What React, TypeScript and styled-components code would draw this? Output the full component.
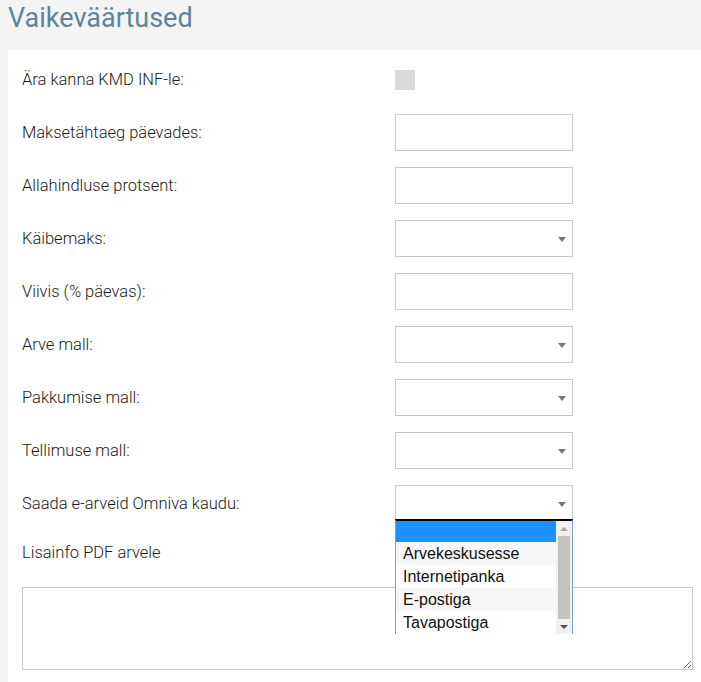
import React from "react";
import styled, { createGlobalStyle } from "styled-components";

const Global = createGlobalStyle`
  html, body { margin: 0; padding: 0; background: #f4f4f4; overflow: hidden; }
  body { font-family: Roboto, "Liberation Sans", sans-serif; }
  * { box-sizing: border-box; }
`;

const Page = styled.div`
  padding-left: 8px;
  min-height: 682px;
`;

const Title = styled.h1`
  margin: 0 0 14px 0;
  font-family: Roboto, sans-serif;
  font-weight: 400;
  font-size: 27px;
  line-height: 36px;
  color: #5f8499;
`;

const Panel = styled.div`
  background: #fff;
  padding: 11px 8px 20px 14px;
  display: flex;
  flex-direction: column;
  gap: 16px;
`;

const Row = styled.div`
  display: flex;
  align-items: center;
  height: 37px;
`;

const Label = styled.label`
  width: 373px;
  flex: none;
  font-size: 16.5px;
  font-weight: 300;
  color: #1a1a1a;
`;

const Checkbox = styled.span`
  width: 20px;
  height: 20px;
  background: #d9d9d9;
  display: block;
`;

const Input = styled.input`
  width: 178px;
  height: 37px;
  border: 1px solid #c8c8c8;
  background: #fff;
  outline: none;
  padding: 0 8px;
`;

const SelectWrap = styled.div`
  position: relative;
  width: 178px;
  height: 37px;
`;

const SelectBox = styled.div`
  width: 178px;
  height: 37px;
  border: 1px solid #c8c8c8;
  background: #fff;
  position: relative;
  &::after {
    content: "";
    position: absolute;
    right: 6px;
    top: 16px;
    border-left: 4px solid transparent;
    border-right: 4px solid transparent;
    border-top: 5px solid #777;
  }
`;

const List = styled.div`
  position: absolute;
  left: 0;
  top: 34px;
  width: 178px;
  height: 115px;
  border-top: 2px solid #000;
  border-left: 1px solid #7e9fd4;
  border-right: 1px solid #7e9fd4;
  background: #fff;
  display: flex;
  z-index: 2;
  font-family: "Liberation Sans", Arial, sans-serif;
  font-size: 16px;
  color: #111;
`;

const Options = styled.div`
  flex: 1;
  display: flex;
  flex-direction: column;
`;

const Option = styled.div<{ $selected?: boolean; $alt?: boolean }>`
  height: ${(p) => (p.$selected ? 21 : 23)}px;
  line-height: 24px;
  padding-left: 7px;
  background: ${(p) => (p.$selected ? "#1e90ff" : p.$alt ? "#f6f6f6" : "#fff")};
  white-space: nowrap;
`;

const Scrollbar = styled.div`
  width: 16px;
  flex: none;
  background: #f1f1f1;
  display: flex;
  flex-direction: column;
  align-items: center;
`;

const ScrollArrow = styled.div<{ $down?: boolean }>`
  height: 15px;
  width: 16px;
  display: flex;
  align-items: center;
  justify-content: center;
  &::before {
    content: "";
    border-left: 4px solid transparent;
    border-right: 4px solid transparent;
    ${(p) =>
      p.$down ? "border-top: 4px solid #505050;" : "border-bottom: 4px solid #a3a3a3;"}
  }
`;

const Thumb = styled.div`
  flex: 1;
  width: 12px;
  background: #c1c1c1;
`;

const BlockLabel = styled.div`
  height: 30px;
  line-height: 30px;
  font-size: 16.5px;
  font-weight: 300;
  color: #1a1a1a;
  margin-bottom: 19px;
`;

const TextArea = styled.textarea`
  display: block;
  width: 100%;
  height: 83px;
  border: 1px solid #c8c8c8;
  resize: both;
  outline: none;
`;

const Section = styled.div``;

const rows: { label: string; kind: "check" | "input" | "select" }[] = [
  { label: "Ära kanna KMD INF-le:", kind: "check" },
  { label: "Maksetähtaeg päevades:", kind: "input" },
  { label: "Allahindluse protsent:", kind: "input" },
  { label: "Käibemaks:", kind: "select" },
  { label: "Viivis (% päevas):", kind: "input" },
  { label: "Arve mall:", kind: "select" },
  { label: "Pakkumise mall:", kind: "select" },
  { label: "Tellimuse mall:", kind: "select" },
];

export default function App() {
  return (
    <>
      <Global />
      <Page>
        <Title>Vaikeväärtused</Title>
        <Panel>
          {rows.map((r) => (
            <Row key={r.label}>
              <Label>{r.label}</Label>
              {r.kind === "check" && <Checkbox />}
              {r.kind === "input" && <Input />}
              {r.kind === "select" && (
                <SelectWrap>
                  <SelectBox />
                </SelectWrap>
              )}
            </Row>
          ))}
          <Row>
            <Label>Saada e-arveid Omniva kaudu:</Label>
            <SelectWrap>
              <SelectBox />
              <List>
                <Options>
                  <Option $selected />
                  <Option $alt>Arvekeskusesse</Option>
                  <Option>Internetipanka</Option>
                  <Option $alt>E-postiga</Option>
                  <Option>Tavapostiga</Option>
                </Options>
                <Scrollbar>
                  <ScrollArrow />
                  <Thumb />
                  <ScrollArrow $down />
                </Scrollbar>
              </List>
            </SelectWrap>
          </Row>
          <Section>
            <BlockLabel>Lisainfo PDF arvele</BlockLabel>
            <TextArea />
          </Section>
        </Panel>
      </Page>
    </>
  );
}
